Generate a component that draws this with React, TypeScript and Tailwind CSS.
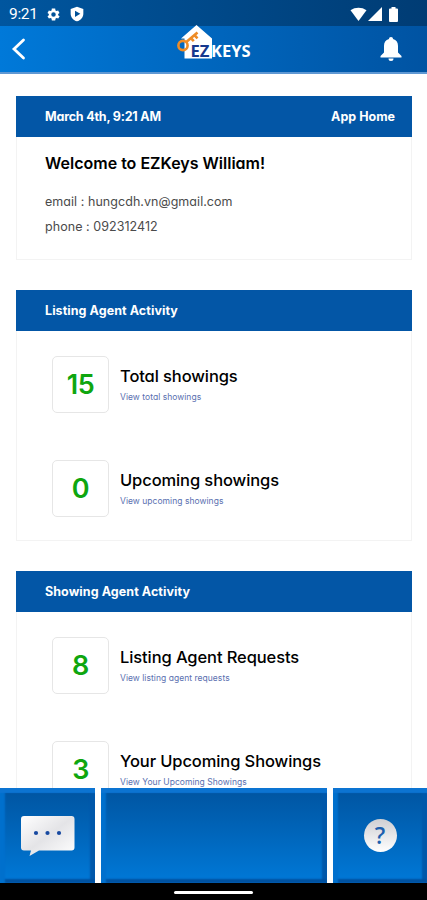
import React from 'react';

interface ActivityItem {
  count: number;
  title: string;
  link: string;
}

interface ActivityCardProps {
  title: string;
  items: ActivityItem[];
}

const LISTING_ACTIVITY: ActivityItem[] = [
  { count: 15, title: 'Total showings', link: 'View total showings' },
  { count: 0, title: 'Upcoming showings', link: 'View upcoming showings' },
];

const SHOWING_ACTIVITY: ActivityItem[] = [
  { count: 8, title: 'Listing Agent Requests', link: 'View listing agent requests' },
  { count: 3, title: 'Your Upcoming Showings', link: 'View Your Upcoming Showings' },
];

const StatusBar: React.FC = () => (
  <div className="flex h-[26px] shrink-0 items-center bg-linear-to-r from-[#00569f] to-[#003c74] pl-[9px] pr-[29px] pt-[2px] text-white">
    <span className="w-[37px] pt-[2px] font-[Roboto] text-[15.5px] leading-none tracking-[-0.3px]">9:21</span>
    <svg className="h-[15px] w-[15px]" viewBox="0 0 24 24" fill="currentColor">
      <path
        fillRule="evenodd"
        d="M19.4 13a7.500 7.500 0 0 0 0-2l2.200-1.600-2.200-3.900-2.500 1a7.500 7.500 0 0 0-1.800-1L14.700 2.500H9.300L8.900 5.500a7.500 7.500 0 0 0-1.800 1l-2.500-1-2.200 3.900L4.600 11a7.500 7.500 0 0 0 0 2l-2.200 1.600 2.200 3.900 2.500-1a7.500 7.500 0 0 0 1.800 1l.4 3h5.400l.6-3a7.500 7.500 0 0 0 1.800-1l2.500 1 2.200-3.900zM12 8.400a3.600 3.600 0 1 1 0 7.200 3.600 3.600 0 0 1 0-7.200z"
      />
    </svg>
    <svg className="ml-[8px] h-[16px] w-[16px]" viewBox="0 0 24 24" fill="currentColor">
      <path
        fillRule="evenodd"
        d="M12 1 2.500 4.500v7C2.500 17 6.500 21.500 12 23c5.500-1.500 9.500-6 9.500-11.500v-7zM9 7l8 4.800-8 4.800z"
      />
    </svg>
    <svg className="ml-auto h-[15px] w-[17px]" viewBox="0 0 17 15" fill="currentColor">
      <path d="M.5 3.200C5.200-.1 11.800-.1 16.500 3.200L8.500 14z" />
    </svg>
    <svg className="ml-[1px] h-[15px] w-[14px]" viewBox="0 0 14 15" fill="currentColor">
      <path d="M14 0v14H0z" />
    </svg>
    <svg className="ml-[7px] h-[15px] w-[9px]" viewBox="0 0 9 15" fill="currentColor">
      <path d="M2.500 0h4v1.500H8q1 0 1 1V14q0 1-1 1H1q-1 0-1-1V2.500q0-1 1-1h1.500z" />
    </svg>
  </div>
);

const Logo: React.FC = () => (
  <svg className="h-[38px] w-[78px]" viewBox="0 0 78 38">
    <path d="M20.500 1 36 14.500V34.500H8.500V14.500H5z" fill="#fff" />
    <g fill="none" stroke="#ee8c26">
      <circle cx="7" cy="21.500" r="4.600" strokeWidth="2.600" />
      <path d="M10.300 18 21.500 8.500M14.800 14l3 3.200M18.300 11l3.200 3.300" strokeWidth="2.600" />
    </g>
    <text x="14.500" y="32.500" fontSize="16.500" fontWeight="700" fill="#16388e" fontFamily="Open Sans, sans-serif" textLength="19" lengthAdjust="spacingAndGlyphs">
      EZ
    </text>
    <text x="35" y="32.500" fontSize="16.500" fontWeight="700" fill="#fff" fontFamily="Open Sans, sans-serif" textLength="39.500" lengthAdjust="spacingAndGlyphs">
      KEYS
    </text>
  </svg>
);

const Header: React.FC = () => (
  <header className="flex h-[48px] shrink-0 border-b-2 border-[#5f98d3] bg-linear-to-r from-[#0079d9] to-[#0053a2]">
    <button className="ml-[10px] w-[60px]" aria-label="Back">
      <svg className="h-[24px] w-[16px]" viewBox="0 0 16 24" fill="none" stroke="#fff" strokeWidth="2.800">
        <path d="M13.500 3 4 12l9.500 9" strokeLinecap="round" />
      </svg>
    </button>
    <div className="-mt-[2px] ml-[106px]">
      <Logo />
    </div>
    <button className="ml-auto mr-[25px] flex w-[60px] items-center justify-end" aria-label="Notifications">
      <svg className="h-[24px] w-[22px]" viewBox="0 0 22 24" fill="#fff">
        <path d="M11 0c1.300 0 2 .8 2 2 3.500.9 5 3.600 5 7v6.500l3.500 3.500v1.500H.5V19L4 15.500V9c0-3.400 1.500-6.100 5-7 0-1.200.7-2 2-2zM8.500 21.500h5q0 2.500-2.500 2.500t-2.500-2.500z" />
      </svg>
    </button>
  </header>
);

const CardHeader: React.FC<{ title: string; action?: string }> = ({ title, action }) => (
  <div className="flex h-[41px] items-center justify-between bg-[#0356a6] pl-[29px] pr-[17px] pt-[2px] text-[12.500px] font-bold text-white">
    <h2 className={action ? 'tracking-[-0.2px]' : 'tracking-[0.07px]'}>{title}</h2>
    {action && <span>{action}</span>}
  </div>
);

const ActivityCard: React.FC<ActivityCardProps> = ({ title, items }) => (
  <section className="shrink-0">
    <CardHeader title={title} />
    <div className="flex h-[210px] flex-col gap-[47px] border-x border-b border-[#f3f3f3] pl-[35px] pt-[25px]">
      {items.map((item) => (
        <div key={item.title} className="flex shrink-0">
          <div className="flex h-[57px] w-[57px] items-center justify-center rounded-[5px] border border-[#e6e6e6] pt-[2px] text-[27px] font-semibold tracking-[-0.5px] text-[#0fa60f]">
            {item.count}
          </div>
          <div className="ml-[11px] pt-[9px]">
            <h3 className="text-[16.500px] font-medium leading-[22px] tracking-[-0.1px] text-black">{item.title}</h3>
            <a className="block text-[8.500px] leading-[20px] tracking-[0.04px] text-[#5a70b0]">{item.link}</a>
          </div>
        </div>
      ))}
    </div>
  </section>
);

const TILE =
  'flex items-center justify-center bg-linear-to-b from-[#0054a0] to-[#0079d8] shadow-[inset_0_5px_1px_#0c74d2,inset_5px_0_2px_#0070cd,inset_0_-4px_2px_#00519f,inset_-5px_0_2px_#0058aa]';

const BottomBar: React.FC = () => (
  <nav className="grid h-[95px] shrink-0 grid-cols-[95px_226px_94px] gap-[6px] bg-white">
    <button className={TILE} aria-label="Messages">
      <svg className="h-[40px] w-[54px]" viewBox="0 0 54 40">
        <defs>
          <linearGradient id="bubble" x1="0" y1="0" x2="1" y2="1">
            <stop offset="0" stopColor="#fff" />
            <stop offset=".5" stopColor="#e4e4e7" />
            <stop offset="1" stopColor="#fff" />
          </linearGradient>
        </defs>
        <path d="M3 0h47.500q3 0 3 3v28.500q0 3-3 3H18L8.500 40l1.500-5.500H3q-3 0-3-3V3q0-3 3-3z" fill="url(#bubble)" />
        <g fill="#1749a0">
          <circle cx="15" cy="17" r="2.100" />
          <circle cx="26.500" cy="17" r="2.100" />
          <circle cx="38" cy="17" r="2.100" />
        </g>
      </svg>
    </button>
    <div className={TILE} />
    <button className={TILE} aria-label="Help">
      <span className="flex h-[33px] w-[33px] items-center justify-center rounded-full bg-linear-to-b from-[#cfcfd3] to-white font-['Open_Sans'] text-[23px] font-semibold leading-none text-[#1c5fae]">
        ?
      </span>
    </button>
  </nav>
);

const App: React.FC = () => {
  return (
    <div className="flex h-[900px] w-[427px] flex-col overflow-hidden bg-white font-[Inter,sans-serif] [font-feature-settings:'cv11']">
      <StatusBar />
      <Header />
      <main className="flex min-h-0 flex-1 flex-col gap-[30px] overflow-hidden pl-[16px] pr-[15px] pt-[22px]">
        <section className="shrink-0">
          <CardHeader title="March 4th, 9:21 AM" action="App Home" />
          <div className="h-[123px] border-x border-b border-[#f3f3f3] pl-[28px] pt-[14px]">
            <h1 className="text-[16px] font-semibold leading-[24px] text-black">Welcome to EZKeys William!</h1>
            <div className="mt-[14px] text-[12.500px] leading-[25px] tracking-[0.05px] text-[#4b4b4b]">
              <p>email : hungcdh.vn@gmail.com</p>
              <p>phone : 092312412</p>
            </div>
          </div>
        </section>
        <ActivityCard title="Listing Agent Activity" items={LISTING_ACTIVITY} />
        <ActivityCard title="Showing Agent Activity" items={SHOWING_ACTIVITY} />
      </main>
      <BottomBar />
      {/* System gesture bar */}
      <div className="flex h-[17px] shrink-0 justify-center bg-black pt-[8px]">
        <div className="h-[3px] w-[79px] rounded-full bg-white" />
      </div>
    </div>
  );
};

export default App;
